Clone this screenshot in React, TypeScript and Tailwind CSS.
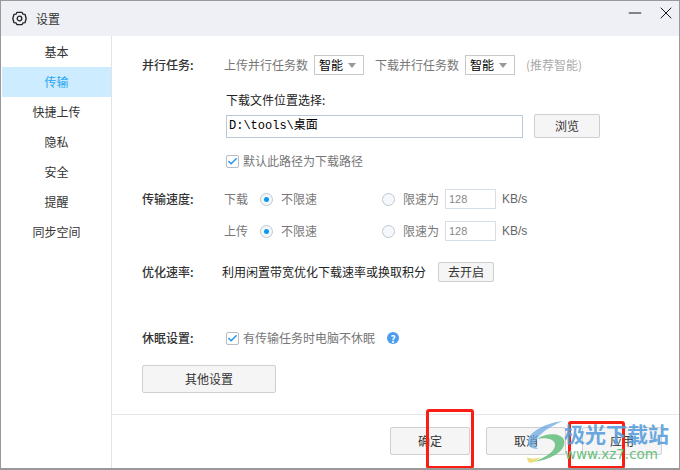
import { Check, X, Minus } from 'lucide-react'

const cjk = '[font-family:"Noto_Sans_CJK_SC","Liberation_Sans",sans-serif]'

const navItems = ['基本', '传输', '快捷上传', '隐私', '安全', '提醒', '同步空间']

function Caret() {
  return <span className="h-0 w-0 border-x-[4px] border-t-[5px] border-x-transparent border-t-[#999]" />
}

function SelectBox({ className }: { className: string }) {
  return (
    <div className={`flex h-5 items-center justify-between border border-[#c8c8c8] pl-[4px] pr-[7px] text-[12px] text-black ${className}`}>
      智能
      <Caret />
    </div>
  )
}

function CheckBox() {
  return (
    <span className="flex h-[13px] w-[13px] items-center justify-center rounded-[2px] border border-[#b8bcc4] bg-white">
      <Check size={11} strokeWidth={3.5} className="text-[#2b98f0]" />
    </span>
  )
}

function Radio({ on }: { on?: boolean }) {
  return (
    <span className="flex h-[13px] w-[13px] items-center justify-center rounded-full border border-[#c0c6ce] bg-[#f4f8fc]">
      {on && <span className="h-[5px] w-[5px] rounded-full bg-[#0b97f5]" />}
    </span>
  )
}

function Button({ label, className }: { label: string; className: string }) {
  return (
    <div className={`flex items-center justify-center rounded-[2px] border border-[#cfcfcf] bg-[#f5f5f5] text-[12px] text-[#333] ${className}`}>
      {label}
    </div>
  )
}

function SpeedRow({ label, className }: { label: string; className: string }) {
  return (
    <div className={`flex h-5 items-center ${className}`}>
      <span className="w-[80px] shrink-0 font-medium text-[#333]">{label === '下载' ? '传输速度:' : ''}</span>
      <span className="w-[38px] shrink-0 pl-[2px] text-[#777]">{label}</span>
      <Radio on />
      <span className="ml-2 w-[101px] shrink-0 text-[#777]">不限速</span>
      <Radio />
      <span className="ml-2 w-[42px] shrink-0 text-[#777]">限速为</span>
      <span className="flex h-5 w-[51px] items-center border border-[#d5dde6] pl-[3px] font-['Liberation_Sans'] text-[11px] text-[#888]">128</span>
      <span className="ml-[6px] font-['Liberation_Sans'] text-[12px] text-[#666]">KB/s</span>
    </div>
  )
}

function Gear() {
  return (
    <svg width="15" height="15" viewBox="0 0 15 15" fill="none" stroke="#222" strokeWidth="1.3" strokeLinejoin="round">
      <path d="M5 1.3h5l1 1.8 2 .2 1.2 4.2-1.2 4.2-2 .2-1 1.8H5l-1-1.8-2-.2L.8 7.5 2 3.3l2-.2Z" />
      <circle cx="7.5" cy="7.5" r="2.3" />
    </svg>
  )
}

export default function App() {
  return (
    <div className={`relative flex h-[470px] w-[680px] flex-col overflow-hidden border-x border-t border-b-2 border-[#999] bg-white text-[12px] ${cjk}`}>
      <header className="flex h-[35px] shrink-0 items-center bg-[#eef0f5] pl-[11px] pr-[3px] text-[#333]">
        <Gear />
        <span className="ml-[9px]">设置</span>
        <Minus size={20} strokeWidth={1.1} className="ml-auto -mt-[12px] text-black" />
        <X size={20} strokeWidth={1.1} className="ml-[11px] -mt-[12px] text-black" />
      </header>

      <div className="flex min-h-0 flex-1">
        <nav className="flex w-[111px] shrink-0 flex-col border-r border-[#e3e3e3] pl-px pt-px">
          {navItems.map((item) => (
            <div
              key={item}
              className={`flex h-[30px] items-center justify-center ${item === '传输' ? 'bg-[#cdecff] text-[#2aa5f0]' : 'text-[#333]'}`}
            >
              {item}
            </div>
          ))}
        </nav>

        <main className="flex min-w-0 flex-1 flex-col">
          <div className="h-[379px] shrink-0 border-b border-[#e6e6e6] pl-[30px] pt-[19px]">
            <div className="flex h-5 items-center">
              <span className="w-[82px] shrink-0 font-medium text-[#333]">并行任务:</span>
              <span className="w-[90px] shrink-0 text-[#777]">上传并行任务数</span>
              <SelectBox className="w-[50px]" />
              <span className="ml-[11px] w-[90px] shrink-0 text-[#777]">下载并行任务数</span>
              <SelectBox className="w-[50px]" />
              <span className="ml-[11px] text-[#aaa]">(推荐智能)</span>
            </div>

            <div className="ml-[84px] mt-[17px] h-[16px] leading-[16px] text-[#222]">下载文件位置选择:</div>

            <div className="ml-[84px] mt-[6px] flex items-center">
              <div className="flex h-[23px] w-[297px] items-center border border-[#b9c8da] pl-[2px] font-['Liberation_Mono','Noto_Sans_CJK_SC',monospace] text-[12px] text-black">
                D:\tools\桌面
              </div>
              <Button label="浏览" className="ml-[11px] h-[24px] w-[66px]" />
            </div>

            <div className="ml-[84px] mt-[16px] flex h-[14px] items-center gap-[4px] text-[#777]">
              <CheckBox />
              默认此路径为下载路径
            </div>

            <SpeedRow label="下载" className="mt-[21px]" />
            <SpeedRow label="上传" className="mt-[12px]" />

            <div className="mt-[21px] flex h-5 items-center">
              <span className="w-[80px] shrink-0 font-medium text-[#333]">优化速率:</span>
              <span className="w-[216px] shrink-0 text-[#222]">利用闲置带宽优化下载速率或换取积分</span>
              <Button label="去开启" className="h-5 w-[56px]" />
            </div>

            <div className="mt-[49px] flex h-[14px] items-center">
              <span className="w-[84px] shrink-0 font-medium text-[#333]">休眠设置:</span>
              <CheckBox />
              <span className="ml-[4px] text-[#777]">有传输任务时电脑不休眠</span>
              <span className="ml-[12px] flex h-[12px] w-[12px] items-center justify-center rounded-full bg-[#4b9cf0] text-[10px] font-bold text-white">?</span>
            </div>

            <Button label="其他设置" className="mt-[20px] h-[28px] w-[134px]" />
          </div>

          <footer className="flex flex-1 items-start justify-end gap-4 pr-[17px] pt-[12px]">
            <Button label="确定" className="h-[28px] w-[80px]" />
            <Button label="取消" className="h-[28px] w-[80px]" />
            <Button label="应用" className="h-[28px] w-[80px]" />
          </footer>
        </main>
      </div>

      {/* annotation boxes and watermark sit on top of the dialog */}
      <div className="absolute left-[425px] top-[408px] h-[60px] w-[48px] rounded-[3px] border-[3px] border-[#fa1d14]" />
      <div className="absolute left-[567px] top-[420px] h-[48px] w-[57px] rounded-[3px] border-[3px] border-[#fa1d14]" />

      <svg className="absolute left-[522px] top-[418px]" width="50" height="46" viewBox="0 0 50 46">
        <path d="M40 2C22 4 6 13 5 22c-1 5 4 8 10 8C8 25 14 13 40 2Z" fill="#6aa8e0" opacity="0.75" />
        <path d="M14 20c8-6 24-7 27 1 3 9-10 19-30 22 12-5 22-11 21-18-1-5-9-7-18-5Z" fill="#63bd7c" opacity="0.85" />
        <path d="M4 38c4 2 8 2 14 0-3 3-8 6-11 6-2-1-3-4-3-6Z" fill="#e6d65c" opacity="0.8" />
      </svg>
      <div className="absolute left-[563px] top-[417px] whitespace-nowrap text-[21px] font-bold leading-[30px] text-[#5a9fdc] opacity-90">极光下载站</div>
      <div className="absolute left-[564px] top-[444px] whitespace-nowrap font-['DejaVu_Sans'] text-[13.5px] leading-[18px] text-[#69c07d]">www.xz7.com</div>
    </div>
  )
}
